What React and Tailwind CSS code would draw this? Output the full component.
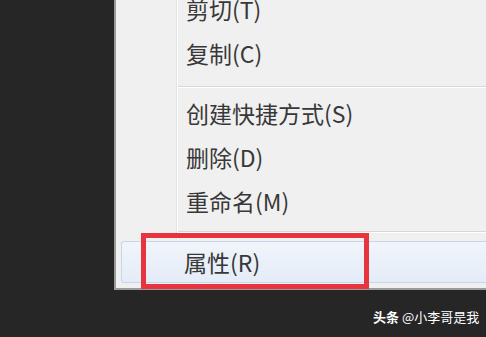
import React from 'react';

const font = { fontFamily: '"Noto Sans CJK SC", "Noto Sans", sans-serif' };

const Gutter = () => (
  <>
    <div className="h-full w-[60px] shrink-0" />
    <div className="h-full w-px shrink-0 bg-[#e2e3e3]" />
    <div className="h-full w-px shrink-0 bg-white" />
  </>
);

const Item = ({ label }) => (
  <div className="flex h-[44px] items-center">
    <Gutter />
    <span className="pl-[8px] text-[23px] leading-none text-[#383838]">{label}</span>
  </div>
);

const Separator = ({ h, top }) => (
  <div className={`flex ${h}`}>
    <Gutter />
    <div className="flex-1">
      <div className={`${top} h-px bg-[#d7d7d7]`} />
      <div className="h-px bg-white" />
    </div>
  </div>
);

const App = () => {
  return (
    <div className="relative h-[337px] w-[486px] overflow-hidden bg-[#262626]" style={font}>
      {/* context menu */}
      <div className="-mt-[13px] ml-[114px] border-b-2 border-l-2 border-[#9a9a9a] bg-[#f0f0f0] pb-[4px]">
        <Item label="剪切(T)" />
        <Item label="复制(C)" />
        <Separator h="h-[16px]" top="mt-[11px]" />
        <Item label="创建快捷方式(S)" />
        <Item label="删除(D)" />
        <Item label="重命名(M)" />
        <Separator h="h-[17px]" top="mt-[8px]" />
        <div className="flex h-[44px] items-center">
          <div className="ml-[5px] flex h-[42px] flex-1 items-center rounded-l-[3px] border border-r-0 border-[#c6d6ec] bg-gradient-to-b from-[#f1f5fb] to-[#e4ecf7] pl-[62px]">
            <span className="text-[23px] leading-none text-[#383838]">属性(R)</span>
          </div>
        </div>
      </div>

      {/* red annotation box */}
      <div className="absolute left-[141px] top-[233px] h-[56px] w-[228px] border-[5px] border-[#e8343f]" />

      {/* watermark */}
      <div className="absolute left-[373px] top-[310px] flex items-center gap-[3px] text-[13px] leading-none text-white">
        <span className="font-bold">头条</span>
        <span>@小李哥是我</span>
      </div>
    </div>
  );
};

export default App;
